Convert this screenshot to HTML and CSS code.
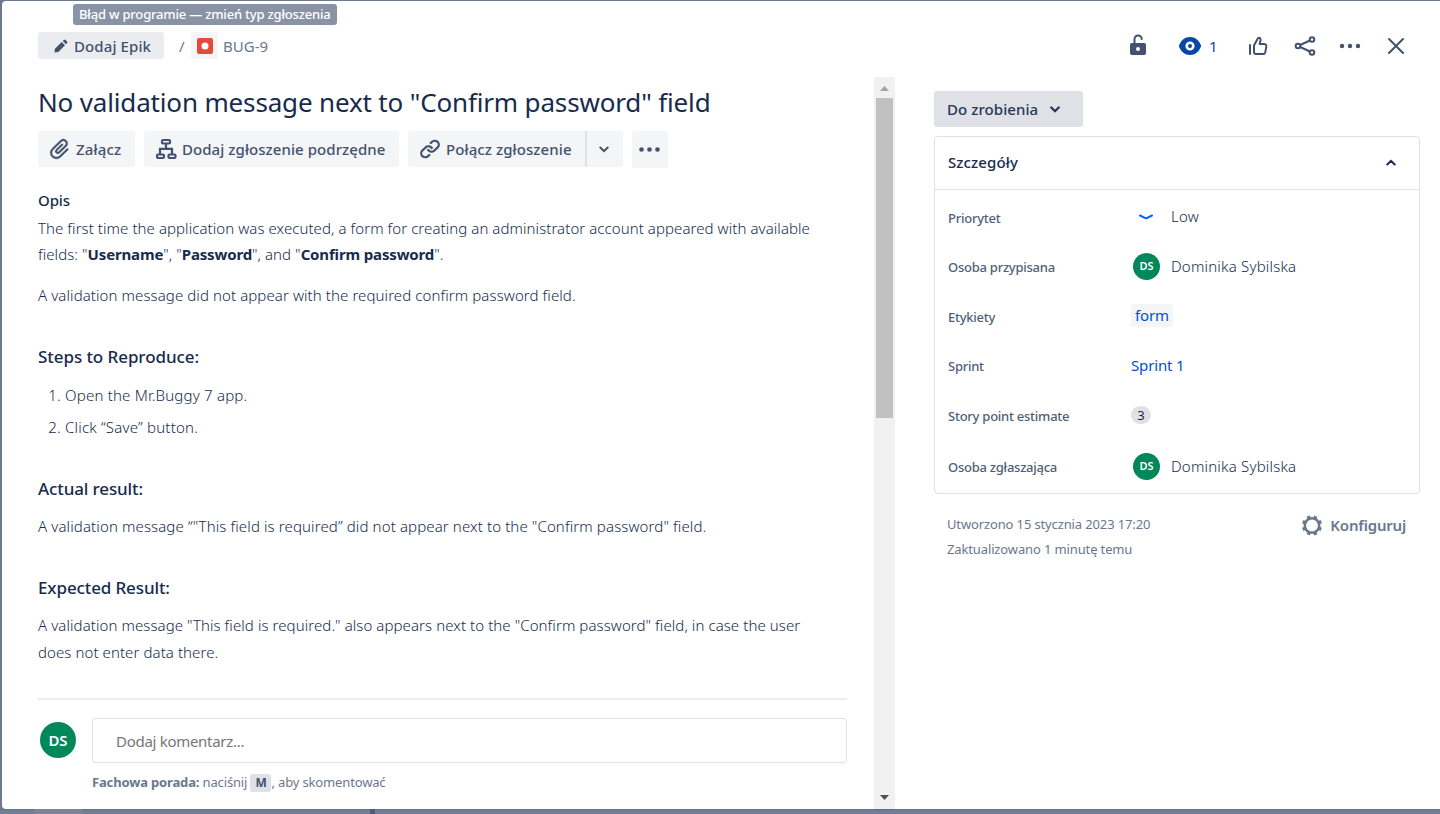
FILE: index.html
```html
<!DOCTYPE html>
<html lang="pl">
<head>
<meta charset="utf-8">
<title>BUG-9</title>
<link rel="stylesheet" href="styles.css">
</head>
<body>
<div class="board-strip"><i class="s1"></i><i class="s2"></i></div>
<div class="modal">
  <header class="header">
    <div class="crumbs">
      <button class="epic"><svg width="14" height="14" viewBox="0 0 14 14"><path d="M1 9.700 7.700 3 11 6.300 4.300 13 .4 13.600Z M8.700 2 10 .9q.8-.7 1.600 0L13.100 2.400q.7.800 0 1.600L12 5.300Z" fill="currentColor"/></svg><span>Dodaj Epik</span></button>
      <span class="slash">/</span>
      <span class="type"><svg width="16" height="16" viewBox="0 0 16 16"><rect width="16" height="16" rx="2" fill="#e5493a"/><circle cx="8" cy="8" r="3.500" fill="#fff"/></svg></span>
      <span class="key">BUG-9</span>
    </div>
    <div class="actions">
      <svg class="a-lock" width="18" height="24" viewBox="0 0 18 24"><path d="M5.500 10V6a3.600 3.600 0 0 1 7.200 0" fill="none" stroke="currentColor" stroke-width="2" stroke-linecap="round"/><path fill-rule="evenodd" fill="currentColor" d="M3 10h12a2 2 0 0 1 2 2v8a2 2 0 0 1-2 2H3a2 2 0 0 1-2-2v-8a2 2 0 0 1 2-2Zm6 4a2 2 0 1 0 0 4 2 2 0 0 0 0-4Z"/></svg>
      <svg class="a-eye" width="24" height="20" viewBox="0 0 24 20"><path d="M12 1C7 1 3 4 .8 10 3 16 7 19 12 19s9-3 11.200-9C21 4 17 1 12 1Z" fill="#0747a6"/><circle cx="12" cy="10" r="3.300" fill="#0747a6" stroke="#fff" stroke-width="2.600"/></svg>
      <span class="watch">1</span>
      <svg class="a-like" width="20" height="20" viewBox="0 0 20 20" fill="none" stroke="currentColor" stroke-width="2" stroke-linejoin="round" stroke-linecap="round"><path d="M2 9v9M6 9.500 9.500 3q.6-1.500 1.700-1.200c1.300.3 1.600 1.500 1.300 2.700L11.600 8H16q2.500.1 2.300 2.400l-1 5.800q-.4 1.800-2.200 1.800H8q-2 0-2-2Z"/></svg>
      <svg class="a-share" width="22" height="20" viewBox="0 0 22 20" fill="none" stroke="currentColor" stroke-width="2"><circle cx="4" cy="10" r="2.300"/><circle cx="18" cy="3.500" r="2.300"/><circle cx="18" cy="16.500" r="2.300"/><path d="m6.200 9 9.700-4.500M6.200 11l9.700 4.500"/></svg>
      <svg class="a-more" width="22" height="6" viewBox="0 0 22 6" fill="currentColor"><circle cx="3" cy="3" r="2.200"/><circle cx="11" cy="3" r="2.200"/><circle cx="19" cy="3" r="2.200"/></svg>
      <svg class="a-close" width="18" height="18" viewBox="0 0 18 18"><path d="m2 2 14 14M16 2 2 16" stroke="currentColor" stroke-width="2" stroke-linecap="round"/></svg>
    </div>
  </header>
  <div class="columns">
    <main class="issue">
      <h1>No validation message next to "Confirm password" field</h1>
      <div class="toolbar">
        <button class="btn attach"><svg width="22" height="22" viewBox="0 0 24 24"><path d="M11.643 17.965c-1.530 1.495-4.016 1.496-5.542.004a3.773 3.773 0 0 1 .002-5.412l7.147-6.980a2.317 2.317 0 0 1 3.239-.001 2.200 2.200 0 0 1-.003 3.163l-5.799 5.663a.791.791 0 0 1-1.110-.003.720.720 0 0 1 .001-1.036l4.770-4.657a.720.720 0 0 0 0-1.035.761.761 0 0 0-1.061 0l-4.769 4.658a2.183 2.183 0 0 0-.001 3.107 2.324 2.324 0 0 0 3.230.002l5.800-5.664a3.633 3.633 0 0 0 .003-5.235 3.850 3.850 0 0 0-5.360 0l-7.148 6.980a5.206 5.206 0 0 0-.003 7.485c2.112 2.064 5.541 2.063 7.665-.009l6.314-6.165a.719.719 0 0 0 .001-1.035.761.761 0 0 0-1.061-.001z" fill="currentColor" stroke="currentColor" stroke-width=".4" transform="translate(-3 -3) scale(1.250)"/></svg><span>Załącz</span></button>
        <button class="btn child"><svg width="22" height="22" viewBox="0 0 22 22" fill="none" stroke="currentColor" stroke-width="2.200"><rect x="7" y="2" width="8" height="3.500" rx="1"/><path d="M11 6v4M5 16v-5.200h12V16"/><rect x="2" y="16.500" width="7" height="3.500" rx="1"/><rect x="13.500" y="16.500" width="7" height="3.500" rx="1"/></svg><span>Dodaj zgłoszenie podrzędne</span></button>
        <div class="split"><button class="btn link"><svg width="22" height="22" viewBox="0 0 24 24" fill="currentColor"><path d="M12.856 5.457l-.937.920a1.002 1.002 0 0 0 0 1.437 1.047 1.047 0 0 0 1.463 0l.984-.966c.967-.950 2.542-1.135 3.602-.288a2.540 2.540 0 0 1 .203 3.810l-2.903 2.852a2.646 2.646 0 0 1-3.696 0l-1.110-1.090L9 13.570l1.108 1.089c1.822 1.788 4.802 1.788 6.622 0l2.905-2.852a4.558 4.558 0 0 0-.357-6.820c-1.893-1.517-4.695-1.226-6.422.470M11.144 19.543l.937-.920a1.002 1.002 0 0 0 0-1.437 1.047 1.047 0 0 0-1.462 0l-.985.966c-.967.950-2.542 1.135-3.602.288a2.540 2.540 0 0 1-.203-3.810l2.903-2.852a2.646 2.646 0 0 1 3.696 0l1.110 1.090L15 11.430l-1.108-1.089c-1.822-1.788-4.802-1.788-6.622 0l-2.905 2.852a4.558 4.558 0 0 0 .357 6.820c1.893 1.517 4.695 1.226 6.422-.470" transform="translate(-2.400 -3) scale(1.200)"/></svg><span>Połącz zgłoszenie</span></button><button class="btn drop"><svg width="10" height="7" viewBox="0 0 10 7"><path d="m1.300 1.500 3.700 3.700 3.700-3.700" fill="none" stroke="currentColor" stroke-width="2" stroke-linecap="round"/></svg></button></div>
        <button class="btn dots"><svg width="22" height="6" viewBox="0 0 22 6" fill="currentColor"><circle cx="2.500" cy="2.500" r="2.300"/><circle cx="10.500" cy="2.500" r="2.300"/><circle cx="18.500" cy="2.500" r="2.300"/></svg></button>
      </div>
      <h2>Opis</h2>
      <div class="description">
        <p class="d1">The first time the application was executed, a form for creating an administrator account appeared with available<br>fields: "<b>Username</b>", "<b>Password</b>", and "<b>Confirm password</b>".</p>
        <p class="d2">A validation message did not appear with the required confirm password field.</p>
        <h3 class="steps">Steps to Reproduce:</h3>
        <ol><li>Open the Mr.Buggy 7 app.</li><li>Click “Save” button.</li></ol>
        <h3 class="actual">Actual result:</h3>
        <p class="d3">A validation message “"This field is required” did not appear next to the "Confirm password" field.</p>
        <h3 class="expected">Expected Result:</h3>
        <p class="d4">A validation message "This field is required." also appears next to the "Confirm password" field, in case the user<br>does not enter data there.</p>
      </div>
      <div class="comment">
        <span class="avatar large">DS</span>
        <div class="editor">
          <div class="field">Dodaj komentarz...</div>
          <div class="hint"><b>Fachowa porada:</b> naciśnij <kbd>M</kbd>, aby skomentować</div>
        </div>
      </div>
    </main>
    <div class="scrollbar"><svg width="9" height="5" viewBox="0 0 9 5"><path d="M0 5 4.500 0 9 5Z" fill="#a3a3a3"/></svg><div class="thumb"></div><svg class="down" width="9" height="5" viewBox="0 0 9 5"><path d="M0 0h9L4.500 5Z" fill="#505050"/></svg></div>
    <aside class="side">
      <button class="status"><span>Do zrobienia</span><svg width="10" height="7" viewBox="0 0 10 7"><path d="m1.300 1.500 3.700 3.700 3.700-3.700" fill="none" stroke="currentColor" stroke-width="2.300" stroke-linecap="round"/></svg></button>
      <section class="panel">
        <div class="panel-head"><span>Szczegóły</span><svg width="10" height="7" viewBox="0 0 10 7"><path d="M1.300 5.500 5 1.800l3.700 3.700" fill="none" stroke="currentColor" stroke-width="2" stroke-linecap="round"/></svg></div>
        <dl>
          <dt>Priorytet</dt><dd class="person low"><svg width="28" height="16" viewBox="0 0 28 16"><path d="m8 7.500 5.500 2.700q.6.300 1.200 0L20 7.500" fill="none" stroke="#0065ff" stroke-width="2" stroke-linecap="round"/></svg><span>Low</span></dd>
          <dt class="raised">Osoba przypisana</dt><dd class="person"><span class="avatar small">DS</span><span class="name">Dominika Sybilska</span></dd>
          <dt>Etykiety</dt><dd><span class="tag">form</span></dd>
          <dt class="raised">Sprint</dt><dd><span class="sprint">Sprint 1</span></dd>
          <dt class="raised">Story point estimate</dt><dd><span class="points">3</span></dd>
          <dt>Osoba zgłaszająca</dt><dd class="person last"><span class="avatar small">DS</span><span class="name">Dominika Sybilska</span></dd>
        </dl>
      </section>
      <footer class="meta">
        <div class="dates"><div class="created">Utworzono 15 stycznia 2023 17:20</div><div class="updated">Zaktualizowano 1 minutę temu</div></div>
        <div class="config"><svg width="22" height="22" viewBox="0 0 22 22" fill="none" stroke="currentColor"><circle cx="11" cy="10.500" r="7.200" stroke-width="2.600"/><path d="M11 .5v3M11 17.500v3M1 10.500h3M18 10.500h3M3.900 3.400l2.100 2.100M16 15.500l2.100 2.100M3.900 17.600l2.100-2.100M16 5.500l2.100-2.100" stroke-width="3.400" transform="rotate(22.500 11 10.500)"/></svg><span>Konfiguruj</span></div>
      </footer>
    </aside>
  </div>
</div>
<div class="tooltip"><span>Błąd w programie — zmień typ zgłoszenia</span></div>
</body>
</html>
```
FILE: styles.css
```css
* { box-sizing: border-box; }
body { margin: 0; height: 814px; padding: 1px 0 0 2px; overflow: hidden; background: #6d7892; color: #172b4d; font: 15px/26px "Noto Sans", "Open Sans", sans-serif; }
h1, h2, h3, p, ol, dl, dd { margin: 0; font-weight: 400; }
button { border: 0; margin: 0; padding: 0; background: none; color: #42526e; font: 500 15px/20px "Noto Sans", sans-serif; display: flex; align-items: center; white-space: nowrap; }
svg { display: block; flex: none; }
span, div, p, h1, h2, h3 { white-space: nowrap; }
.modal { height: 808px; background: #fff; border-radius: 4px 0 0 4px; display: flex; flex-direction: column; }
.board-strip { position: absolute; left: 0; top: 809px; width: 1440px; height: 5px; background: linear-gradient(#626e88, #737f99 2px); display: flex; }
.board-strip i { background: #7a859d; height: 5px; }
.board-strip .s1 { margin-left: 34px; width: 48px; }
.board-strip .s2 { margin-left: 288px; width: 5px; background: #4f5c78; }
.tooltip { position: absolute; left: 73px; top: 4px; width: 264px; height: 21px; border-radius: 3px; background: #8a93a5; color: #fff; font-size: 13px; font-weight: 500; line-height: 20px; padding-left: 6px; }
.tooltip span { letter-spacing: -.19px; }

.header { height: 76px; flex: none; padding: 0 35px 0 36px; display: flex; justify-content: space-between; }
.crumbs { display: flex; align-items: center; height: 27px; margin-top: 31px; color: #6b778c; }
.epic { width: 126px; height: 27px; border-radius: 3px; background: #ebecf0; padding-left: 16px; gap: 6px; letter-spacing: .1px; }
.slash { margin-left: 15px; width: 12px; }
.type { width: 27px; height: 27px; border-radius: 3px; background: #f4f5f7; display: grid; place-items: center; }
.key { margin-left: 5px; letter-spacing: 0; }
.actions { display: flex; align-items: center; height: 26px; margin-top: 32px; color: #42526e; }
.actions svg { position: relative; top: -.5px; }
.actions .a-lock { margin-right: 31px; top: -1px; }
.watch { width: 10px; margin: 0 29px 0 7px; color: #0747a6; }
.a-like { margin-right: 26px; }
.a-share { margin-right: 23px; }
.a-more { margin-right: 26px; }

.columns { flex: 1; display: flex; }
.issue { width: 872px; flex: none; padding: 9px 27px 0 36px; }
h1 { font-size: 26px; line-height: 32px; letter-spacing: -.16px; }
.toolbar { display: flex; gap: 9px; margin-top: 13px; height: 37px; }
.btn { height: 36px; background: #f4f5f7; border-radius: 3px; padding-left: 11px; gap: 5px; }
.attach { width: 97px; letter-spacing: .15px; }
.child { width: 255px; letter-spacing: .06px; }
.split { display: flex; gap: 2px; background: linear-gradient(#dfe1e6, #dfe1e6) 177px 0 / 2px 36px no-repeat; }
.link { width: 177px; letter-spacing: .08px; border-radius: 3px 0 0 3px; }
.drop { width: 36px; padding-left: 12px; border-radius: 0 3px 3px 0; }
.dots { width: 36px; height: 37px; padding-left: 7px; }
h2 { margin-top: 20px; font-size: 15px; line-height: 24px; font-weight: 500; letter-spacing: -.1px; }
.description { margin-top: 3px; height: 485px; border-bottom: 2px solid #ebecf0; }
.description p, li { font-weight: 300; }
.description p { line-height: 26px; letter-spacing: .07px; }
.description b { font-weight: 700; letter-spacing: -.15px; }
.description .d2 { margin-top: 15px; letter-spacing: .09px; }
.description .d3 { letter-spacing: .12px; }
.description .d4 { line-height: 26.500px; letter-spacing: .08px; }
h3 { font-size: 17px; line-height: 24px; font-weight: 500; letter-spacing: -.12px; margin-top: 34px; }
.description .steps { margin-top: 37px; letter-spacing: -.07px; }
.description .expected { margin-top: 37.250px; }
ol { margin-top: 9.500px; padding-left: 27px; }
li { line-height: 32px; letter-spacing: .2px; }
h3 + p { margin-top: 12.250px; }
.comment { display: flex; margin-top: 18px; }
.avatar { background: #00875a; color: #fff; border-radius: 50%; display: grid; place-items: center; font-weight: 600; }
.large { width: 36px; height: 36px; margin: 4px 16px 0 2px; font-size: 15px; }
.editor { width: 755px; }
.field { height: 45px; border: 1px solid #dfe1e6; border-radius: 3px; padding-left: 23px; line-height: 45px; color: #757575; letter-spacing: -.29px; }
.hint { margin-top: 9px; font-size: 13px; line-height: 20px; color: #6b778c; letter-spacing: -.15px; }
kbd { display: inline-block; width: 21px; height: 18px; border-radius: 3px; background: #dfe1e6; color: #42526e; font: 700 12px/18px "Noto Sans", sans-serif; text-align: center; }

.scrollbar { width: 21px; flex: none; background: #f1f1f1; display: flex; flex-direction: column; align-items: center; padding: 9px 0 9px; }
.thumb { width: 17px; height: 320px; margin-top: 7px; background: #c1c1c1; }
.down { margin-top: auto; }

.side { width: 506px; margin-left: 39px; padding-top: 14px; }
.status { width: 149px; height: 36px; border-radius: 3px; background: #dfe1e6; color: #253858; padding-left: 13px; gap: 12px; letter-spacing: .07px; }
.panel { width: 486px; height: 358px; margin-top: 9px; border: 1px solid #dfe1e6; border-radius: 4px; }
.panel-head { height: 53px; border-bottom: 1px solid #dfe1e6; padding: 0 23px 2px 13px; display: flex; align-items: center; justify-content: space-between; font-weight: 500; letter-spacing: .1px; }
dl { display: grid; grid-template-columns: 183px 1fr; grid-template-rows: 51px 49px 50px 49px 51px 50px; align-items: center; padding: 2px 0 0 13px; }
dt { font-size: 13px; font-weight: 500; color: #505f79; letter-spacing: -.25px; white-space: nowrap; }
.raised { padding-bottom: 2px; }
dd { display: flex; align-items: center; letter-spacing: .2px; padding-bottom: 3px; font-weight: 300; }
.person { gap: 11px; padding-left: 2px; }
.last { padding-bottom: 2px; }
.low { padding-left: 1px; gap: 11px; }
.small { width: 27px; height: 27px; font-size: 11px; letter-spacing: 0; }
.tag { height: 23px; line-height: 22px; padding: 0 4px; background: #f4f5f7; border-radius: 3px; color: #0052cc; font-weight: 400; letter-spacing: -.15px; }
.sprint { color: #0052cc; font-weight: 400; letter-spacing: -.15px; }
.points { width: 20px; height: 18px; border-radius: 9px; background: #dfe1e6; font-size: 13px; line-height: 18px; text-align: center; font-weight: 400; }
.meta { width: 486px; padding: 18px 14px 0 13px; display: flex; justify-content: space-between; color: #6b778c; font-size: 13px; line-height: 25px; letter-spacing: -.13px; }
.config { display: flex; align-items: center; gap: 7px; height: 27px; font-size: 15px; font-weight: 600; letter-spacing: -.2px; }
```
